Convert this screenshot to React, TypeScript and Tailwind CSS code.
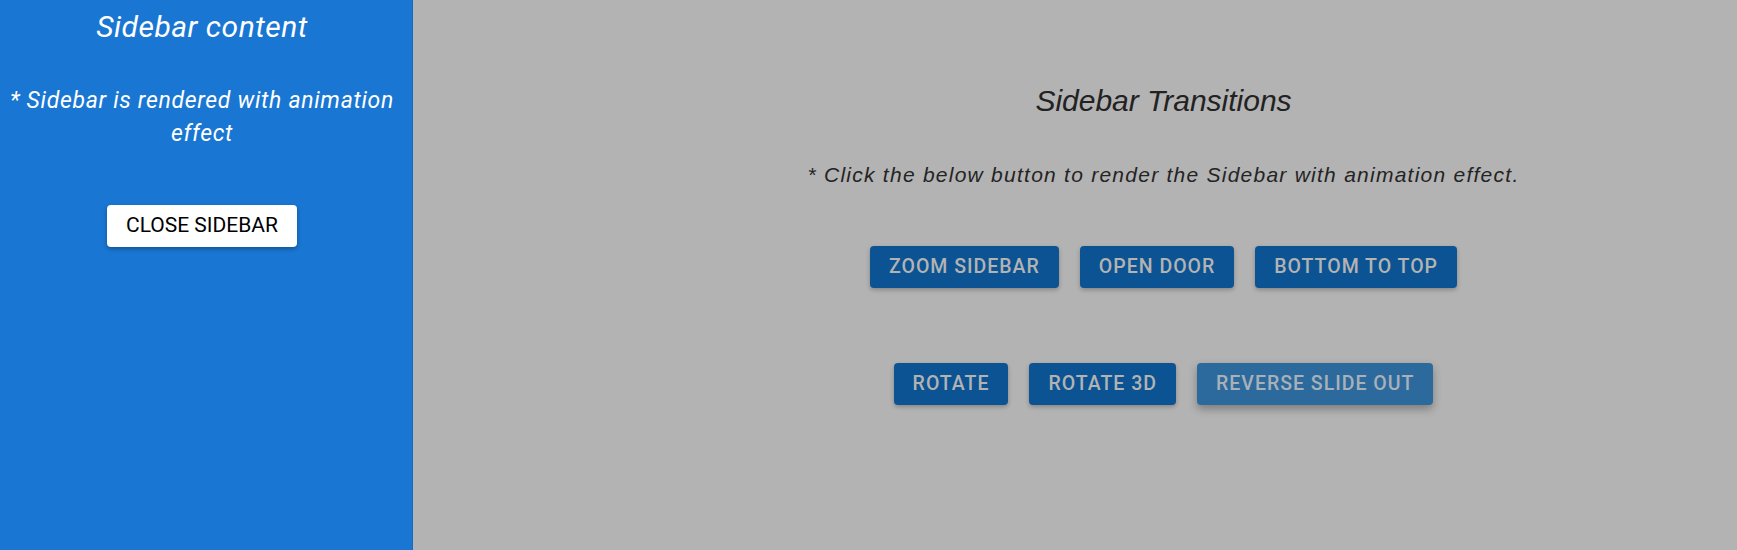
export default function App() {
  const firstRow = ['Zoom Sidebar', 'Open Door', 'Bottom To Top'];
  const secondRow = ['Rotate', 'Rotate 3D'];

  return (
    <div className="flex h-screen w-full overflow-hidden">
      {/* sidebar */}
      <aside className="w-[413px] shrink-0 bg-[#1976d2] border-r border-[#1769c2] pl-[4px] pr-[12px] text-center text-white italic font-['Roboto',sans-serif]">
        <h2 className="pt-[10px] text-[30px] leading-[34px] tracking-[0.5px]">Sidebar content</h2>
        <p className="mt-[40px] text-[23px] leading-[33px] tracking-[0.7px]">
          * Sidebar is rendered with animation effect
        </p>
        <button className="mt-[55px] h-[42px] rounded px-[19px] bg-white not-italic text-[21px] text-black uppercase shadow-[0_2px_4px_rgba(0,0,0,0.3)]">
          Close Sidebar
        </button>
      </aside>

      <main className="flex-1 bg-[#b3b3b3] pl-[177px] text-center">
        <h1 className="pt-[83px] text-[30px] leading-[36px] italic text-[#222] font-['Liberation_Sans',Arial,sans-serif]">
          Sidebar Transitions
        </h1>
        <p className="mt-[44px] text-[21px] leading-[24px] tracking-[1.25px] italic text-[#242424] font-['Liberation_Sans',Arial,sans-serif]">
          * Click the below button to render the Sidebar with animation effect.
        </p>

        <div className="mt-[59px] flex justify-center gap-[21px] font-['Roboto',sans-serif]">
          {firstRow.map((label) => (
            <button
              key={label}
              className="h-[42px] rounded px-[19px] bg-[#0c5394] text-[19.5px] tracking-[1px] font-medium uppercase text-[#b3b3b3] shadow-[0_2px_4px_rgba(0,0,0,0.25)]"
            >
              {label}
            </button>
          ))}
        </div>

        <div className="mt-[75px] flex justify-center gap-[21px] font-['Roboto',sans-serif]">
          {secondRow.map((label) => (
            <button
              key={label}
              className="h-[42px] rounded px-[19px] bg-[#0c5394] text-[19.5px] tracking-[1px] font-medium uppercase text-[#b3b3b3] shadow-[0_2px_4px_rgba(0,0,0,0.25)]"
            >
              {label}
            </button>
          ))}
          <button className="h-[42px] rounded px-[19px] bg-[#2c6a9e] text-[19.5px] tracking-[1px] font-medium uppercase text-[#a9b1b8] shadow-[0_4px_8px_rgba(0,0,0,0.3)]">
            Reverse Slide Out
          </button>
        </div>
      </main>
    </div>
  );
}
